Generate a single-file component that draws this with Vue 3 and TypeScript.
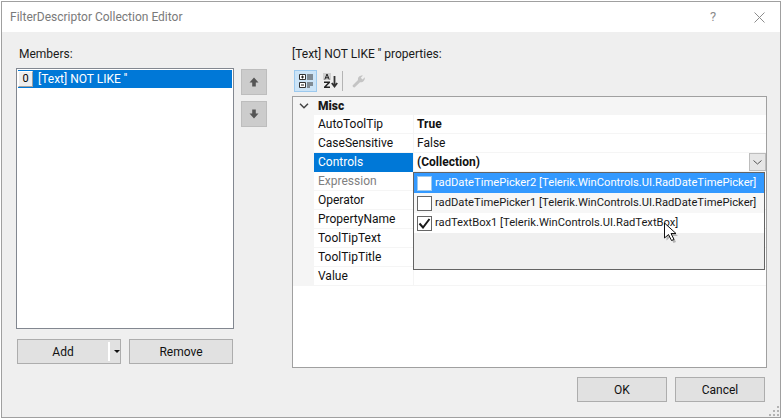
<script setup lang="ts">
const rows: { name: string; value: string; bold?: boolean; dim?: boolean; sel?: boolean }[] = [
  { name: 'AutoToolTip', value: 'True', bold: true },
  { name: 'CaseSensitive', value: 'False' },
  { name: 'Controls', value: '(Collection)', bold: true, sel: true },
  { name: 'Expression', value: '', dim: true },
  { name: 'Operator', value: '' },
  { name: 'PropertyName', value: '' },
  { name: 'ToolTipText', value: '' },
  { name: 'ToolTipTitle', value: '' },
  { name: 'Value', value: '' },
]
const options = [
  { text: 'radDateTimePicker2 [Telerik.WinControls.UI.RadDateTimePicker]', cls: 'hot', on: false },
  { text: 'radDateTimePicker1 [Telerik.WinControls.UI.RadDateTimePicker]', cls: 'soft', on: false },
  { text: 'radTextBox1 [Telerik.WinControls.UI.RadTextBox]', cls: 'plain', on: true },
]
</script>

<template>
  <div class="page">
    <div class="win">
      <header class="title">
        <span class="cap">FilterDescriptor Collection Editor</span>
        <span class="help">?</span>
        <svg class="close" width="11" height="11" viewBox="0 0 11 11"><path d="M.5.5l10 10M10.5.5l-10 10" stroke="#8c8c8c" fill="none" /></svg>
      </header>
      <div class="body">
        <div class="main">
          <section class="left">
            <div class="lbl">Members:</div>
            <div class="lrow">
              <div class="list">
                <div class="item"><span class="idx">0</span><span class="itxt">[Text] NOT LIKE ''</span></div>
              </div>
              <div class="arrows">
                <button class="arr"><svg width="10" height="10" viewBox="0 0 10 10"><path d="M5 .5L9.500 5.500H6.800V9.500H3.200V5.500H.5z" fill="#555" /></svg></button>
                <button class="arr"><svg width="10" height="10" viewBox="0 0 10 10"><path d="M5 9.500L9.500 4.500H6.800V.5H3.200V4.500H.5z" fill="#555" /></svg></button>
              </div>
            </div>
            <div class="btns">
              <button class="btn add"><span class="addl">Add</span><i class="sep"></i><span class="caret"></span></button>
              <button class="btn rem">Remove</button>
            </div>
          </section>
          <section class="right">
            <div class="lbl plbl">[Text] NOT LIKE '' properties:</div>
            <div class="tools">
              <span class="tool on">
                <svg width="16" height="16" viewBox="0 0 16 16"><path d="M1.500 1.500h6v5h-6zM1.500 9.500h6v5h-6z" fill="#fff" stroke="#333" /><path d="M3 4h3M4.500 2.500v3M3 12h3" stroke="#222" /><path d="M9 2h6M9 4h6M9 6h6M9 10h6M9 12h6M9 14h3" stroke="#333" /></svg>
              </span>
              <span class="tool">
                <svg width="16" height="16" viewBox="0 0 16 16"><path d="M1 0h8v7H1z" fill="#cfcfcf" /><path d="M2.800 6.500L5 1l2.200 5.500M3.600 4.800h2.800" stroke="#222" fill="none" /><path d="M2 8.500h6v1.300L4.300 13.500H8V15H2v-1.300l3.700-3.700H2z" fill="#222" /><path d="M12.500 3v10M9.800 10l2.700 3.500 2.700-3.500" stroke="#333" stroke-width="1.800" fill="none" /></svg>
              </span>
              <i class="tsep"></i>
              <span class="tool">
                <svg width="16" height="16" viewBox="0 0 16 16"><path d="M2 14l-.5-1.500L7 7c-.5-2.500 1.500-5 5-4.500L9.800 4.800l1.700 1.700L13.800 4.200c.5 3-2 5.500-4.800 5L3.500 14.500z" fill="#c4c4c4" /></svg>
              </span>
            </div>
            <div class="grid">
              <div class="cat"><svg class="chev" width="10" height="6" viewBox="0 0 10 6"><path d="M1 .8l4 4 4-4" stroke="#444" stroke-width="1.500" fill="none" /></svg><b>Misc</b></div>
              <div v-for="r in rows" :key="r.name" class="row">
                <div class="gut"></div>
                <div class="nm" :class="{ sel: r.sel, dim: r.dim }">{{ r.name }}</div>
                <div class="val" :class="{ bold: r.bold }">{{ r.value }}
                  <span v-if="r.sel" class="dd"><svg width="9" height="5" viewBox="0 0 9 5"><path d="M.5.5l4 3.500 4-3.500" stroke="#555" fill="none" /></svg></span>
                </div>
              </div>
              <div class="pop">
                <div v-for="o in options" :key="o.text" class="opt" :class="o.cls">
                  <span class="cb"><svg v-if="o.on" width="13" height="11" viewBox="0 0 13 11"><path d="M1.500 5.500L5 9.500 11.500 1" stroke="#1a1a1a" stroke-width="2" fill="none" /></svg></span>
                  <span class="otxt">{{ o.text }}</span>
                </div>
              </div>
              <svg class="cursor" width="17" height="23" viewBox="0 0 17 23"><path d="M3.500 3.500v15l4-3.500 3 6 2.500-1-3-6h5z" fill="#000" opacity=".25" /><path d="M1.500 1v15l4-3.500 3 6 2.500-1-3-6h5z" fill="#fff" stroke="#111" /></svg>
            </div>
          </section>
        </div>
        <footer class="foot">
          <button class="btn ok">OK</button>
          <button class="btn ok">Cancel</button>
        </footer>
        <svg class="grip" width="11" height="11" viewBox="0 0 11 11"><path d="M8 0h2v2H8zM4 4h2v2H4zM8 4h2v2H8zM0 8h2v2H0zM4 8h2v2H4zM8 8h2v2H8z" fill="#b4b4b4" /></svg>
      </div>
    </div>
  </div>
</template>

<style>
html, body { margin: 0; background: #fff; overflow: hidden; }
</style>

<style scoped>
.page { width: 782px; height: 419px; padding: 1px; box-sizing: border-box; font: 12px/16px Roboto, "Open Sans", sans-serif; color: #1a1a1a; }
.win { height: 417px; border: 1px solid #a0a0a0; box-sizing: border-box; display: flex; flex-direction: column; background: #fff; }
.title { height: 30px; flex: none; display: flex; align-items: center; padding-left: 8px; color: #7a7a7a; position: relative; }
.cap { flex: 1; }
.help { position: absolute; left: 708px; top: 7px; color: #8c8c8c; font-size: 13px; }
.close { position: absolute; left: 752px; top: 10px; }
.body { flex: 1; background: #efefef; position: relative; display: flex; flex-direction: column; }
.main { display: flex; padding: 14px 13px 0 14px; flex: 1; gap: 24px; }
.left { width: 252px; flex: none; }
.lbl { height: 22px; padding-left: 3px; }
.lrow { display: flex; gap: 7px; }
.list { width: 218px; height: 261px; box-sizing: border-box; border: 1px solid #828790; background: #fff; padding: 1px; }
.item { height: 18px; background: #0078d7; display: flex; align-items: center; color: #fff; }
.idx { width: 15px; height: 16px; box-sizing: border-box; background: #eee; border: 1px solid #fff; border-right-color: #a0a0a0; border-bottom-color: #a0a0a0; color: #000; text-align: center; line-height: 14px; font-size: 11px; }
.itxt { margin-left: 5px; }
.arrows { display: flex; flex-direction: column; gap: 6px; padding-top: 1px; }
.arr { width: 26px; height: 26px; padding: 0; border: 1px solid #bdbdbd; background: #cccccc; display: flex; align-items: center; justify-content: center; }
.btns { display: flex; gap: 8px; padding: 10px 0 0 1px; }
.btn { width: 104px; height: 25px; box-sizing: border-box; border: 1px solid #adadad; background: #e1e1e1; font: inherit; color: #111; padding: 0; }
.add { display: flex; align-items: center; position: relative; }
.addl { width: 90px; text-align: center; }
.sep { width: 2px; height: 19px; background: #fff; }
.caret { margin-left: 4px; border: 3px solid transparent; border-top: 3px solid #111; border-bottom: 0; }
.right { flex: 1; min-width: 0; }
.plbl { height: 22px; padding-left: 0; }
.tools { height: 28px; padding: 0 0 3px 2px; display: flex; align-items: center; gap: 1px; box-sizing: border-box; }
.tool { width: 23px; height: 22px; box-sizing: border-box; display: flex; align-items: center; justify-content: center; border: 1px solid transparent; }
.tool.on { background: #cce4f7; border-color: #9cc9ee; }
.tsep { width: 1px; height: 20px; background: #b4b4b4; margin: 0 3px 0 0; }
.grid { width: 475px; height: 272px; box-sizing: border-box; border: 1px solid #a0a0a0; background: #fff; position: relative; }
.cat { height: 18px; background: #f5f5f5; display: flex; align-items: center; font-weight: 700; }
.chev { margin: 0 0 0 6px; }
.cat b { margin-left: 9px; }
.row { height: 19px; display: flex; }
.gut { width: 21px; background: #f5f5f5; flex: none; }
.nm { width: 99px; flex: none; box-sizing: border-box; padding-left: 4px; line-height: 18px; border-bottom: 1px solid #f5f5f5; background: #fff; color: #111; }
.nm.sel { background: #0078d7; color: #fff; border-bottom-color: #0078d7; }
.nm.dim { color: #808080; }
.val { flex: 1; box-sizing: border-box; border-left: 1px solid #f5f5f5; border-bottom: 1px solid #f5f5f5; padding-left: 3px; line-height: 18px; position: relative; color: #111; }
.bold { font-weight: 700; color: #111; }
.dd { position: absolute; right: 0; top: 0; width: 17px; height: 18px; box-sizing: border-box; background: #e6e6e6; border: 1px solid #bdbdbd; display: flex; align-items: center; justify-content: center; }
.pop { position: absolute; left: 120px; top: 75px; width: 352px; height: 98px; box-sizing: border-box; border: 1px solid #646464; background: #f0f0f0; }
.opt { height: 20px; display: flex; align-items: center; }
.hot { background: #3399ff; color: #fff; }
.soft { background: #f7f7f7; }
.plain { background: #fff; }
.cb { width: 15px; height: 15px; box-sizing: border-box; margin-left: 3px; border: 1px solid #666; background: #fff; flex: none; display: flex; align-items: center; justify-content: center; }
.hot .cb { border-color: #9cc9ee; }
.otxt { margin-left: 3px; white-space: nowrap; font-size: 11.2px; }
.cursor { position: absolute; left: 370px; top: 125px; }
.foot { height: 49px; flex: none; display: flex; justify-content: flex-end; gap: 8px; padding: 9px 15px 0 0; box-sizing: border-box; }
.ok { width: 90px; }
.grip { position: absolute; right: 0; bottom: 0; }
</style>
